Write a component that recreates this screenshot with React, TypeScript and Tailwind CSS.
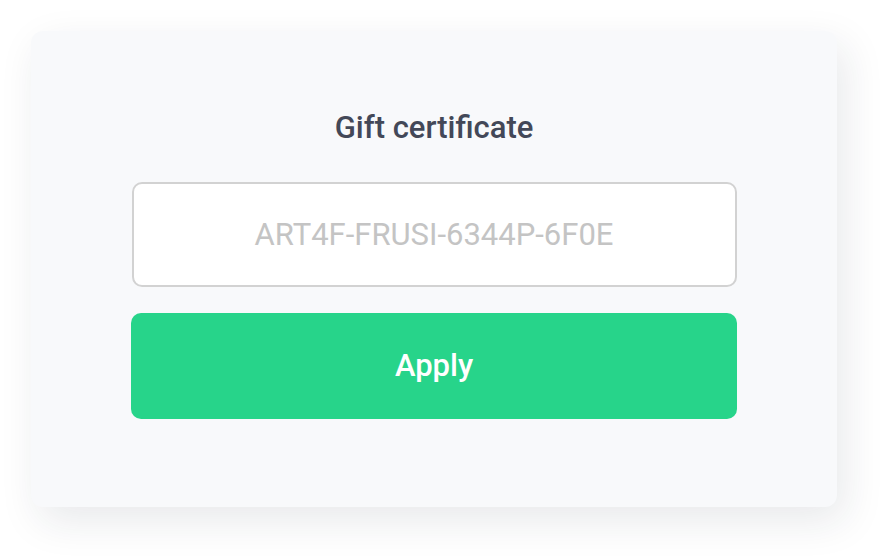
export default function App() {
  return (
    <div className="h-[556px] w-[885px] bg-white" style={{ fontFamily: 'Roboto, "Liberation Sans", sans-serif' }}>
      <div className="ml-[31px] pt-[31px]">
        <div className="flex h-[476px] w-[806px] flex-col items-center rounded-xl bg-[#f8f9fb] pt-[79px] shadow-[8px_14px_40px_rgba(30,40,60,0.10)]">
          <h2 className="text-[31px] leading-[36px] font-medium text-[#434858]">Gift certificate</h2>
          <input
            className="mt-[36px] h-[105px] w-[605px] rounded-[10px] border-2 border-[#d2d2d2] bg-white text-center text-[31px] text-[#9a9a9a] outline-none placeholder:text-[#c4c4c4]"
            placeholder="ART4F-FRUSI-6344P-6F0E"
          />
          <button className="mt-[26px] h-[106px] w-[606px] rounded-[10px] bg-[#27d48a] text-[31px] font-medium text-white">
            Apply
          </button>
        </div>
      </div>
    </div>
  );
}
